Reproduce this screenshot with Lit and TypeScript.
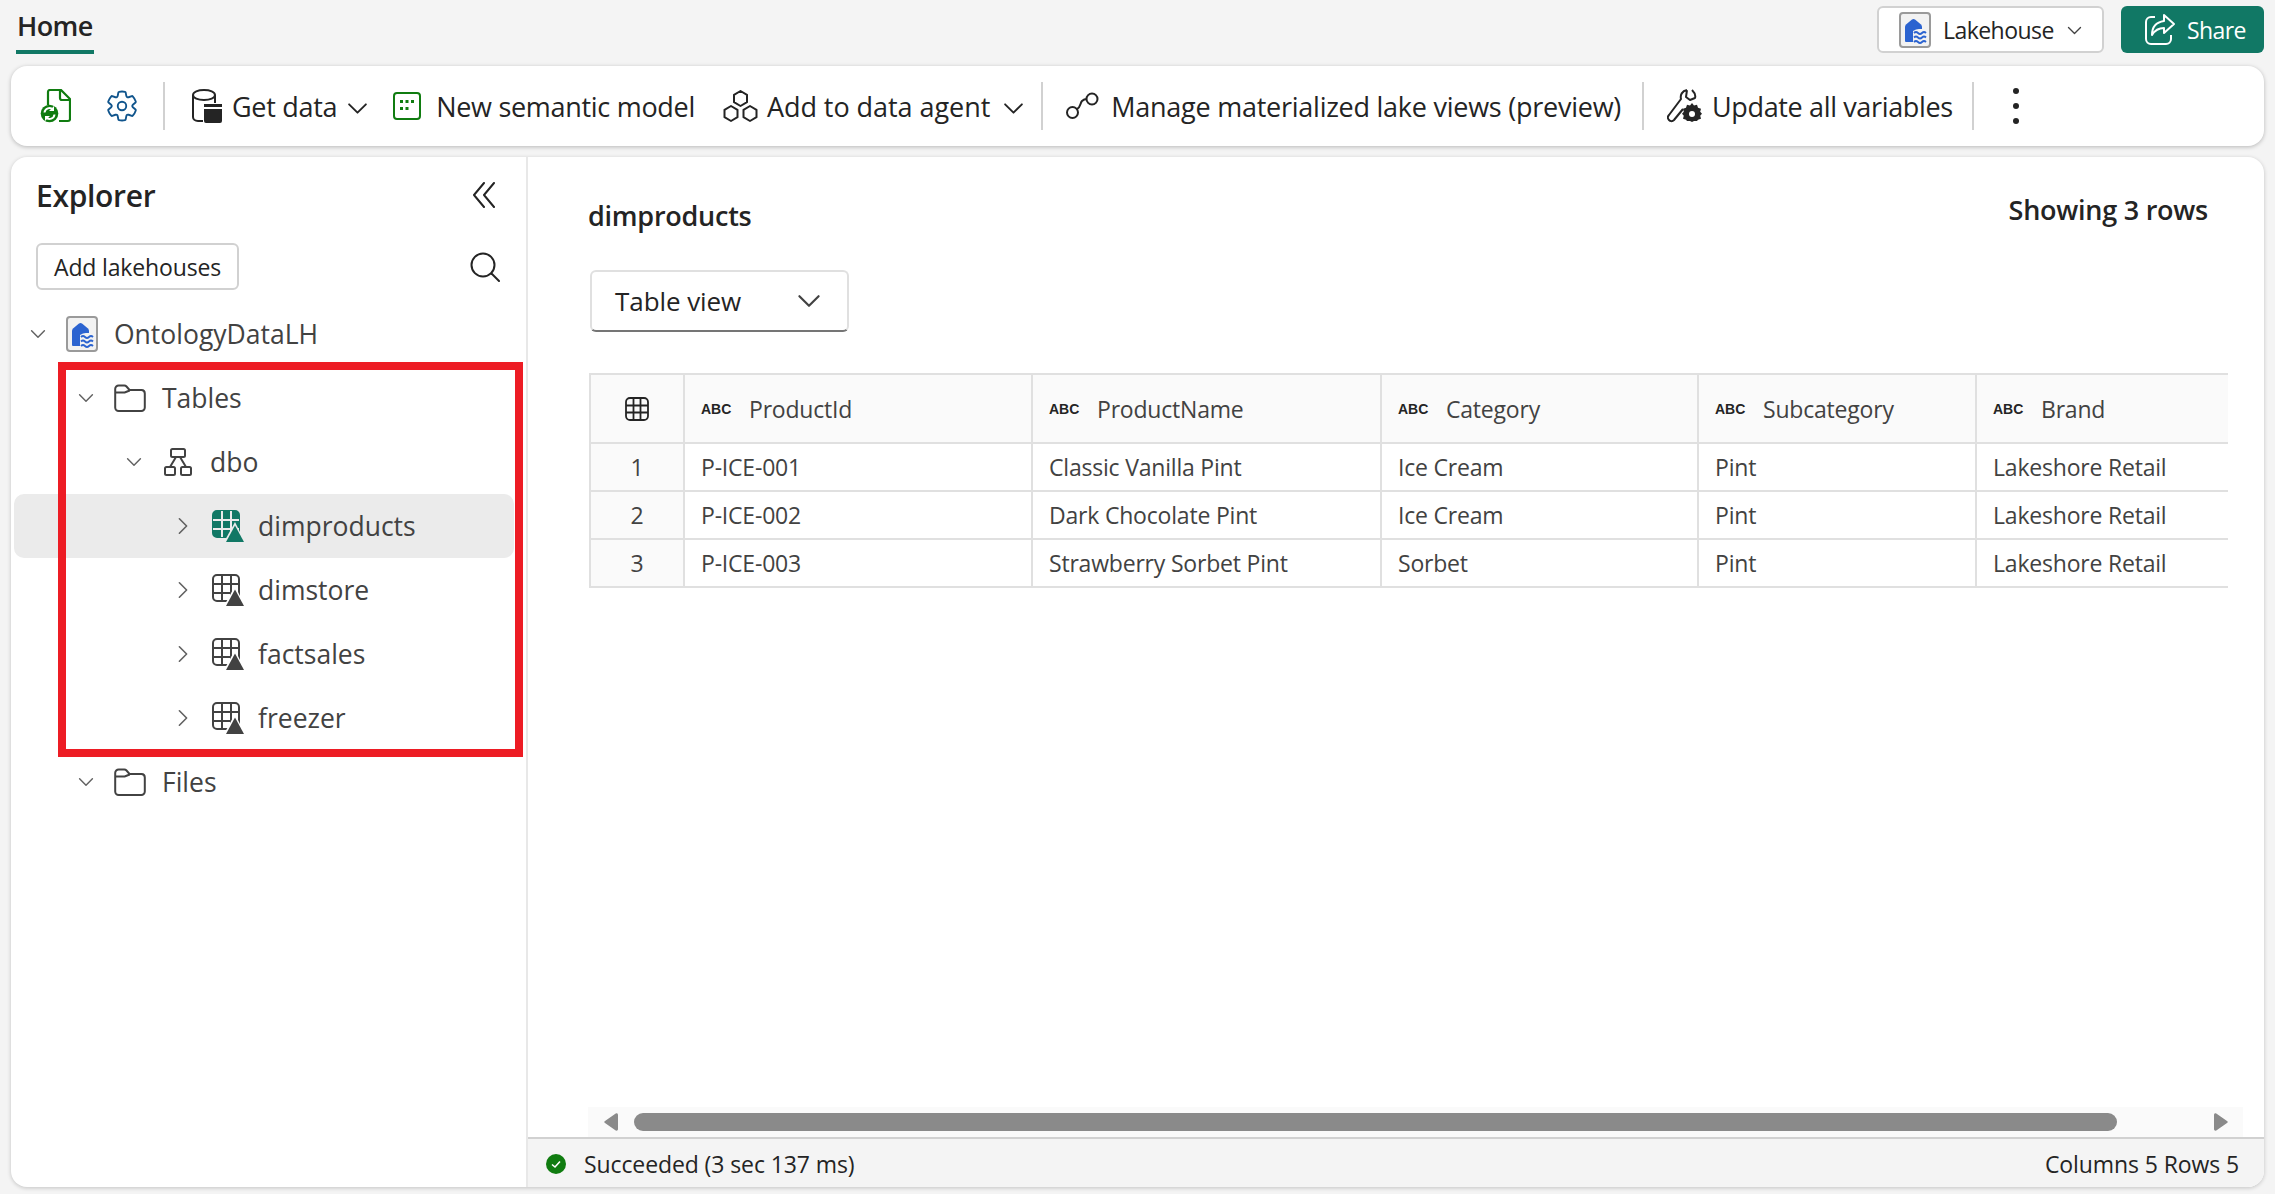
import { LitElement, html, css, svg } from "lit";
import { customElement } from "lit/decorators.js";

const chevronDown = html`<svg class="chev" width="20" height="20" viewBox="0 0 20 20"><path d="M2 6l8 8 8-8" fill="none" stroke="currentColor" stroke-width="1.8" stroke-linecap="round" stroke-linejoin="round"/></svg>`;
const chevronRight = html`<svg class="chev" width="20" height="20" viewBox="0 0 20 20"><path d="M6 2l8 8-8 8" fill="none" stroke="currentColor" stroke-width="1.8" stroke-linecap="round" stroke-linejoin="round"/></svg>`;

const lakehouseIcon = html`<svg width="32" height="36" viewBox="0 0 32 36">
  <rect x="1" y="1" width="30" height="34" rx="3" fill="#f2f2f2" stroke="#9a9a9a" stroke-width="2"/>
  <path d="M6 29V15q0-1.500 1-2.500l6-5q1.500-1 3 0l6 5q1 1 1 2.500v14q0 1-1 1H7q-1 0-1-1z" fill="#2b63d0"/>
  <path d="M14 19q3-2 6-2h8v14H14z" fill="#f2f2f2"/>
  <path d="M15 21q2-2 4 0t4 0 4 0M15 25.500q2-2 4 0t4 0 4 0M15 30q2-2 4 0t4 0 4 0" fill="none" stroke="#2b63d0" stroke-width="1.800"/>
</svg>`;

const fileIcon = html`<svg width="31" height="34" viewBox="0 0 31 34">
  <path d="M8 16V3a2 2 0 0 1 2-2h11l9 9v20a2 2 0 0 1-2 2h-9M20 1v8a2 2 0 0 0 2 2h8" fill="none" stroke="#107c10" stroke-width="2.2"/>
  <circle cx="9.500" cy="24.500" r="8.800" fill="#107c10"/>
  <path d="M4.500 23.500a5 5 0 0 1 8.500-3M14.500 25.500a5 5 0 0 1-8.500 3" fill="none" stroke="#fff" stroke-width="2"/>
  <path d="M14 17v5h-5zM5 32v-5h5z" fill="#fff"/>
</svg>`;

const gearIcon = html`<svg width="34" height="34" viewBox="0 0 20 20"><path d="M1.910 7.380A8.500 8.500 0 0 1 3.700 4.300a.5.5 0 0 1 .54-.13l1.920.68a1 1 0 0 0 1.320-.76l.36-2a.5.5 0 0 1 .4-.4 8.530 8.530 0 0 1 3.550 0c.2.040.35.2.38.4l.37 2a1 1 0 0 0 1.320.76l1.920-.68a.5.5 0 0 1 .54.130 8.500 8.500 0 0 1 1.780 3.080c.06.2 0 .4-.15.54l-1.560 1.320a1 1 0 0 0 0 1.520l1.560 1.320a.5.5 0 0 1 .15.54 8.500 8.500 0 0 1-1.780 3.080.5.5 0 0 1-.54.130l-1.920-.68a1 1 0 0 0-1.320.76l-.37 2a.5.5 0 0 1-.38.4 8.530 8.530 0 0 1-3.560 0 .5.5 0 0 1-.39-.4l-.36-2a1 1 0 0 0-1.320-.76l-1.920.68a.5.5 0 0 1-.54-.130 8.500 8.500 0 0 1-1.780-3.080.5.5 0 0 1 .15-.54l1.560-1.320a1 1 0 0 0 0-1.520L2.060 7.920a.5.5 0 0 1-.15-.54Z" fill="none" stroke="#0f548c" stroke-width="1.100"/><circle cx="10" cy="10" r="2.500" fill="none" stroke="#0f548c" stroke-width="1.100"/></svg>`;

const getDataIcon = html`<svg width="30" height="34" viewBox="0 0 30 34">
  <path d="M11 32H6c-3 0-5-2-5-4V6c0-3 5-5 11-5s11 2 11 5v8M1 6c0 3 5 5 11 5s11-2 11-5" fill="none" stroke="#242424" stroke-width="2"/>
  <path d="M12 15h18v3H12zM12 20h18v12a2 2 0 0 1-2 2H14a2 2 0 0 1-2-2z" fill="#242424"/>
</svg>`;

const modelIcon = html`<svg width="28" height="28" viewBox="0 0 28 28">
  <rect x="1" y="1" width="26" height="26" rx="3" fill="none" stroke="#107c10" stroke-width="2"/>
  <g fill="#107c10"><rect x="7" y="8" width="3" height="3"/><rect x="12.500" y="8" width="3" height="3"/><rect x="18" y="8" width="3" height="3"/><rect x="7" y="15" width="3" height="3"/><rect x="12.500" y="15" width="3" height="3"/></g>
</svg>`;

const hexIcon = html`<svg width="35" height="33" viewBox="0 0 35 33"><g fill="none" stroke="#242424" stroke-width="2" stroke-linejoin="round">
  <path d="M17.500 1l6.500 3.800v7.400l-6.500 3.800-6.500-3.800V4.800z"/>
  <path d="M8 16l6.500 3.800v7.400L8 31l-6.500-3.800v-7.400z"/>
  <path d="M27 16l6.500 3.800v7.400L27 31l-6.500-3.800v-7.400z"/>
</g></svg>`;

const lineageIcon = html`<svg width="33" height="28" viewBox="0 0 33 28"><g fill="none" stroke="#242424" stroke-width="2">
  <circle cx="6.500" cy="20.500" r="5.500"/><circle cx="26" cy="7" r="5.500"/>
  <path d="M11 17c4-2 3-6 5-8s3-2 5-2"/>
</g></svg>`;

const wrenchIcon = html`<svg width="35" height="34" viewBox="0 0 35 34">
  <path d="M20 1c-5 1-7 5-6 9L2 26c-2 2-1 4 0 5s3 2 5 0l9-11M20 1l-1 7 4 3 5-2c1-3-1-6-3-8" fill="none" stroke="#242424" stroke-width="2" stroke-linejoin="round"/>
  <path d="M25 14l2 2.500 3-.8 1 3 3 1-.8 3 1.800 2-1.800 2 .8 3-3 1-1 1.300h-3l-2 1-2-1h-3l-1-1.300-3-1 .8-3-1.800-2 1.800-2-.8-3 3-1 1-3 3 .8z" fill="#242424"/>
  <circle cx="25" cy="25" r="3" fill="#fff"/>
</svg>`;

const folderIcon = html`<svg width="32" height="28" viewBox="0 0 32 28"><path d="M1.200 5a3.500 3.500 0 0 1 3.500-3.500h5.600a3 3 0 0 1 2.200 1l3 3.500h12a3.500 3.500 0 0 1 3.300 3.500v14a3.500 3.500 0 0 1-3.500 3.500H4.700a3.500 3.500 0 0 1-3.500-3.500zM1.200 8.500h9.500l5-2" fill="none" stroke="#424242" stroke-width="2"/></svg>`;

const schemaIcon = html`<svg width="28" height="28" viewBox="0 0 28 28"><g fill="none" stroke="#424242" stroke-width="2">
  <rect x="7" y="1" width="14" height="8" rx="1.500"/><rect x="1" y="19" width="10" height="8" rx="1.500"/><rect x="17" y="19" width="10" height="8" rx="1.500"/>
  <path d="M12 9l-6 10M16 9l6 10"/>
</g></svg>`;

const gridLines = svg`<path d="M10 1v26M19 1v26M1 10h26M1 19h26"/>`;
const tableIcon = (active: boolean) => html`<svg width="32" height="32" viewBox="0 0 32 32">
  <rect x="1" y="1" width="26" height="26" rx="4" fill=${active ? "#117865" : "none"} stroke=${active ? "#117865" : "#424242"} stroke-width="2"/>
  <g fill="none" stroke=${active ? "#ebebeb" : "#424242"} stroke-width="2">${gridLines}</g>
  <path d="M23 12l10 20H12z" fill=${active ? "#ebebeb" : "#fff"}/>
  <path d="M23 15.500l9 16.500H14z" fill=${active ? "#117865" : "#424242"}/>
</svg>`;

const abc = html`<span class="abc">ABC</span>`;

interface TreeRow {
  label: string;
  depth: number;
  open: boolean;
  icon: unknown;
  active?: boolean;
}

const treeRows: TreeRow[] = [
  { label: "OntologyDataLH", depth: 0, open: true, icon: lakehouseIcon },
  { label: "Tables", depth: 1, open: true, icon: folderIcon },
  { label: "dbo", depth: 2, open: true, icon: schemaIcon },
  { label: "dimproducts", depth: 3, open: false, icon: tableIcon(true), active: true },
  { label: "dimstore", depth: 3, open: false, icon: tableIcon(false) },
  { label: "factsales", depth: 3, open: false, icon: tableIcon(false) },
  { label: "freezer", depth: 3, open: false, icon: tableIcon(false) },
  { label: "Files", depth: 1, open: true, icon: folderIcon },
];

const columns = ["ProductId", "ProductName", "Category", "Subcategory", "Brand"];
const columnWidths = [94, 348, 349, 317, 278, 254];
const rows = [
  ["P-ICE-001", "Classic Vanilla Pint", "Ice Cream", "Pint", "Lakeshore Retail"],
  ["P-ICE-002", "Dark Chocolate Pint", "Ice Cream", "Pint", "Lakeshore Retail"],
  ["P-ICE-003", "Strawberry Sorbet Pint", "Sorbet", "Pint", "Lakeshore Retail"],
];

@customElement("app-root")
export class AppRoot extends LitElement {
  static styles = css`
    :host {
      display: block;
      width: 2275px;
      height: 1194px;
      overflow: hidden;
      background: #f4f4f4;
      color: #242424;
      font-family: "Open Sans", "Noto Sans", sans-serif;
    }
    svg { display: block; flex: none; }
    .page { padding: 0 11px; }

    .tabs { height: 66px; display: flex; justify-content: space-between; }
    .tab {
      margin-left: 5px;
      padding: 2px 1px 0;
      box-sizing: border-box;
      height: 54px;
      border-bottom: 4px solid #117865;
      font-size: 27px;
      font-weight: 600;
      letter-spacing: -0.6px;
      line-height: 47px;
    }
    .actions { display: flex; gap: 17px; padding-top: 6px; height: 47px; }
    .item-btn {
      width: 227px;
      box-sizing: border-box;
      border: 2px solid #d1d1d1;
      border-radius: 6px;
      background: #fff;
      display: flex;
      align-items: center;
      padding: 1px 0 0 20px;
      gap: 12px;
      font-size: 23px;
      letter-spacing: -0.55px;
    }
    .item-btn .chev { width: 15px; height: 15px; margin-left: 1px; color: #424242; }
    .share {
      width: 143px;
      background: #117865;
      color: #fff;
      border-radius: 6px;
      display: flex;
      align-items: center;
      padding-left: 23px;
      gap: 11px;
      box-sizing: border-box;
      font-size: 23px;
      letter-spacing: -0.6px;
    }

    .toolbar {
      height: 80px;
      background: #fff;
      border-radius: 16px;
      box-shadow: 0 1px 4px rgba(0, 0, 0, 0.25);
      display: flex;
      align-items: center;
      padding-left: 29px;
      font-size: 27px;
      letter-spacing: -0.3px;
    }
    .tool { display: flex; align-items: center; gap: 10px; white-space: nowrap; }
    .tool .chev { width: 21px; height: 21px; margin-top: 4px; }
    .gear { margin-left: 34px; }
    .sep { width: 2px; height: 48px; background: #d1d1d1; flex: none; }
    .sep-gear { margin-left: 24px; }
    .get-data { margin-left: 27px; }
    .new-model { margin-left: 25px; gap: 15px; }
    .add-agent { margin-left: 28px; gap: 9px; letter-spacing: -0.05px; }
    .add-agent .chev { margin-left: 4px; }
    .sep-agent { margin-left: 17px; }
    .lineage { margin-left: 23px; gap: 12px; letter-spacing: -0.25px; }
    .sep-lineage { margin-left: 21px; }
    .variables { margin-left: 23px; gap: 10px; letter-spacing: -0.36px; }
    .sep-variables { margin-left: 19px; }
    .dots { margin-left: 39px; display: flex; flex-direction: column; gap: 9px; }
    .dots i { width: 6px; height: 6px; border-radius: 50%; background: #242424; }

    .card {
      margin-top: 11px;
      height: 1030px;
      background: #fff;
      border-radius: 16px;
      box-shadow: 0 1px 4px rgba(0, 0, 0, 0.2);
      display: flex;
      overflow: hidden;
    }

    .explorer { width: 515px; flex: none; position: relative; }
    .explorer-head {
      height: 76px;
      padding: 0 30px 0 25px;
      display: flex;
      align-items: center;
      justify-content: space-between;
      font-size: 30px;
      font-weight: 600;
      letter-spacing: -0.3px;
    }
    .explorer-tools {
      height: 47px;
      margin-top: 10px;
      padding: 0 26px 0 25px;
      display: flex;
      align-items: center;
      justify-content: space-between;
    }
    .add {
      width: 203px;
      height: 47px;
      box-sizing: border-box;
      border: 2px solid #d1d1d1;
      border-radius: 6px;
      padding-top: 1px;
      display: flex;
      align-items: center;
      justify-content: center;
      font-size: 23px;
      letter-spacing: -0.15px;
    }
    .tree { margin-top: 12px; }
    .row {
      height: 64px;
      margin: 0 12px 0 3px;
      box-sizing: border-box;
      display: flex;
      align-items: center;
      gap: 16px;
      font-size: 26.5px;
      letter-spacing: 0;
      color: #424242;
      border-radius: 10px;
    }
    .row.active { background: #ebebeb; }
    .row .chev-cell { width: 24px; display: flex; justify-content: center; color: #616161; flex: none; }
    .row .chev { width: 16px; height: 16px; }
    .row.closed .chev { width: 18px; height: 18px; }
    .row.closed .chev-cell { margin-left: 1px; margin-right: 1px; }
    .row.closed .icon-cell { margin-right: -2px; }
    .row .icon-cell { width: 32px; display: flex; justify-content: center; flex: none; }
    .annotation {
      position: absolute;
      left: 47px;
      top: 205px;
      width: 465px;
      height: 395px;
      box-sizing: border-box;
      border: 8px solid #ed1c24;
      pointer-events: none;
    }

    .results {
      flex: 1;
      min-width: 0;
      border-left: 2px solid #e8e8e8;
      display: flex;
      flex-direction: column;
    }
    .results-head {
      height: 113px;
      box-sizing: border-box;
      padding: 0 56px 0 60px;
      display: flex;
      justify-content: space-between;
      font-size: 27px;
      font-weight: 600;
      letter-spacing: -0.25px;
    }
    .results-head .title { margin-top: 41px; line-height: 36px; }
    .results-head .count { margin-top: 35px; line-height: 36px; }
    .view {
      margin-left: 62px;
      width: 259px;
      height: 62px;
      box-sizing: border-box;
      border: 2px solid #e0e0e0;
      border-bottom-color: #757575;
      border-radius: 6px;
      display: flex;
      align-items: center;
      justify-content: space-between;
      padding: 0 26px 0 23px;
      font-size: 26px;
      letter-spacing: -0.07px;
    }
    .view .chev { width: 24px; height: 24px; color: #424242; }
    .table-wrap { margin: 41px 0 0 61px; width: 1639px; overflow: hidden; }
    table {
      border-collapse: collapse;
      table-layout: fixed;
      width: 1640px;
      font-size: 23px;
      letter-spacing: -0.2px;
      color: #424242;
    }
    th, td { border: 2px solid #e0e0e0; padding: 0 0 0 16px; text-align: left; font-weight: 400; white-space: nowrap; overflow: hidden; }
    th { height: 67px; background: #fafafa; }
    td { height: 46px; }
    .index { background: #fafafa; text-align: center; padding: 0; }
    .index svg { margin: 0 auto; }
    .col-head { display: flex; align-items: center; gap: 18px; }
    .abc { font-family: "Liberation Sans", sans-serif; font-size: 14px; font-weight: 700; letter-spacing: 0; color: #242424; width: 30px; flex: none; }

    .spacer { flex: 1; }
    .scroll {
      height: 30px;
      margin: 0 21px 0 60px;
      background: #fafafa;
      display: flex;
      align-items: center;
      padding: 0 15px 0 16px;
      gap: 16px;
    }
    .scroll .thumb { width: 1483px; height: 18px; border-radius: 9px; background: #8a8a8a; }
    .scroll .push { flex: 1; }
    .status {
      height: 50px;
      box-sizing: border-box;
      border-top: 2px solid #d1d1d1;
      background: #f4f4f4;
      display: flex;
      align-items: center;
      justify-content: space-between;
      padding: 1px 25px 0 18px;
      font-size: 23px;
      letter-spacing: -0.1px;
    }
    .state { display: flex; align-items: center; gap: 18px; }
  `;

  render() {
    return html`
      <div class="page">
        <div class="tabs">
          <div class="tab">Home</div>
          <div class="actions">
            <div class="item-btn">${lakehouseIcon}<span>Lakehouse</span>${chevronDown}</div>
            <div class="share">
              <svg width="32" height="31" viewBox="0 0 32 31"><path d="M11 3H7a5 5 0 0 0-5 5v17a5 5 0 0 0 5 5h15a5 5 0 0 0 5-5v-4M20 1l10 9-10 9v-5c-6 0-9 2-12 7 0-9 5-13 12-14z" fill="none" stroke="#fff" stroke-width="2" stroke-linejoin="round"/></svg>
              <span>Share</span>
            </div>
          </div>
        </div>

        <div class="toolbar">
          ${fileIcon}
          <div class="gear">${gearIcon}</div>
          <div class="sep sep-gear"></div>
          <div class="tool get-data">${getDataIcon}<span>Get data</span>${chevronDown}</div>
          <div class="tool new-model">${modelIcon}<span>New semantic model</span></div>
          <div class="tool add-agent">${hexIcon}<span>Add to data agent</span>${chevronDown}</div>
          <div class="sep sep-agent"></div>
          <div class="tool lineage">${lineageIcon}<span>Manage materialized lake views (preview)</span></div>
          <div class="sep sep-lineage"></div>
          <div class="tool variables">${wrenchIcon}<span>Update all variables</span></div>
          <div class="sep sep-variables"></div>
          <div class="dots"><i></i><i></i><i></i></div>
        </div>

        <div class="card">
          <aside class="explorer">
            <div class="explorer-head">
              <span>Explorer</span>
              <svg width="24" height="26" viewBox="0 0 24 26"><path d="M12 1L2 13l10 12M22 1L12 13l10 12" fill="none" stroke="#242424" stroke-width="2" stroke-linecap="round" stroke-linejoin="round"/></svg>
            </div>
            <div class="explorer-tools">
              <div class="add">Add lakehouses</div>
              <svg width="30" height="30" viewBox="0 0 30 30"><circle cx="13" cy="13" r="11.500" fill="none" stroke="#242424" stroke-width="2"/><path d="M21.500 21.500L29 29" stroke="#242424" stroke-width="2" stroke-linecap="round"/></svg>
            </div>
            <div class="tree">
              ${treeRows.map(
                (r) => html`
                  <div class="row ${r.active ? "active" : ""} ${r.open ? "" : "closed"}" style="padding-left:${12 + r.depth * 48}px">
                    <span class="chev-cell">${r.open ? chevronDown : chevronRight}</span>
                    <span class="icon-cell">${r.icon}</span>
                    <span>${r.label}</span>
                  </div>
                `
              )}
            </div>
            <div class="annotation"></div>
          </aside>

          <section class="results">
            <div class="results-head">
              <span class="title">dimproducts</span>
              <span class="count">Showing 3 rows</span>
            </div>
            <div class="view"><span>Table view</span>${chevronDown}</div>
            <div class="table-wrap">
              <table>
                <colgroup>
                  ${columnWidths.map((w) => html`<col style="width:${w}px" />`)}
                </colgroup>
                <thead>
                  <tr>
                    <th class="index">
                      <svg width="24" height="24" viewBox="0 0 24 24"><g fill="none" stroke="#242424" stroke-width="1.800"><rect x="1" y="1" width="22" height="22" rx="4"/><path d="M8.500 1v22M15.500 1v22M1 8.500h22M1 15.500h22"/></g></svg>
                    </th>
                    ${columns.map((c) => html`<th><div class="col-head">${abc}<span>${c}</span></div></th>`)}
                  </tr>
                </thead>
                <tbody>
                  ${rows.map(
                    (r, i) => html`<tr><td class="index">${i + 1}</td>${r.map((v) => html`<td>${v}</td>`)}</tr>`
                  )}
                </tbody>
              </table>
            </div>
            <div class="spacer"></div>
            <div class="scroll">
              <svg width="14" height="18" viewBox="0 0 14 18"><path d="M14 2c0-2-2-2-3-1L1 8c-1 .5-1 1.500 0 2l10 7c1 1 3 1 3-1z" fill="#8a8a8a"/></svg>
              <div class="thumb"></div>
              <div class="push"></div>
              <svg width="14" height="18" viewBox="0 0 14 18"><path d="M0 2c0-2 2-2 3-1l10 7c1 .5 1 1.500 0 2L3 17c-1 1-3 1-3-1z" fill="#8a8a8a"/></svg>
            </div>
            <div class="status">
              <div class="state">
                <svg width="20" height="20" viewBox="0 0 20 20"><circle cx="10" cy="10" r="10" fill="#107c10"/><path d="M6 10.500l3 2.500 5-5.500" fill="none" stroke="#fff" stroke-width="1.600"/></svg>
                <span>Succeeded (3 sec 137 ms)</span>
              </div>
              <span>Columns 5 Rows 5</span>
            </div>
          </section>
        </div>
      </div>
    `;
  }
}
